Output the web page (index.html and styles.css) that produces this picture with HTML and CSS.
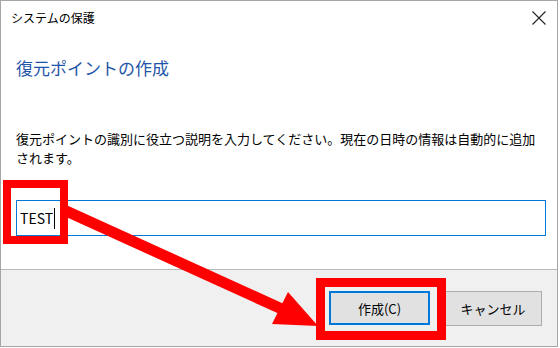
FILE: index.html
```html
<!DOCTYPE html>
<html lang="ja">
<head>
    <meta charset="UTF-8">
    <title>システムの保護</title>
    <link rel="stylesheet" href="styles.css">
</head>
<body>
    <div class="window">
        <div class="titlebar">
            <span class="title">システムの保護</span>
            <svg class="close" width="14" height="14" viewBox="0 0 14 14">
                <path d="M0.5 0.5 L13.5 13.5 M13.5 0.5 L0.5 13.5" stroke="#222" stroke-width="1.1" fill="none"/>
            </svg>
        </div>

        <div class="content">
            <h1 class="heading">復元ポイントの作成</h1>
            <p class="desc">復元ポイントの識別に役立つ説明を入力してください。現在の日時の情報は自動的に追加されます。</p>
            <div class="textbox">TEST<span class="caret"></span></div>
        </div>

        <div class="footer">
            <button class="btn btn-default">作成(C)</button>
            <button class="btn btn-cancel">キャンセル</button>
        </div>

        <!-- annotation: red boxes and arrow -->
        <svg class="marks" width="558" height="347" viewBox="0 0 558 347">
            <rect x="7" y="184" width="57" height="56" fill="none" stroke="#ff0000" stroke-width="8"/>
            <rect x="320.5" y="282.5" width="121" height="53" fill="none" stroke="#ff0000" stroke-width="9"/>
            <line x1="64" y1="210" x2="284" y2="310" stroke="#ff0000" stroke-width="11"/>
            <polygon points="288,292 272,324 318,326" fill="#ff0000"/>
        </svg>
    </div>
</body>
</html>
```

FILE: styles.css
```css
* {
    margin: 0;
    padding: 0;
    box-sizing: border-box;
}

body {
    background-color: #ffffff;
    font-family: "Noto Sans CJK JP", "Noto Sans", sans-serif;
    color: #000;
    overflow: hidden;
}

.window {
    position: relative;
    width: 558px;
    height: 347px;
    border: 1px solid #a6a6a6;
    background-color: #fff;
    display: flex;
    flex-direction: column;
}

.titlebar {
    height: 35px;
    display: flex;
    align-items: flex-start;
    justify-content: space-between;
    padding: 9px 10px 0 10px;
}

.title {
    font-size: 12px;
    line-height: 16px;
    color: #000;
}

.close {
    margin-top: 1px;
    margin-right: 1px;
}

.content {
    padding: 0 10px 0 15px;
    flex: 1;
}

.heading {
    margin-top: 20px;
    font-size: 17px;
    line-height: 24px;
    font-weight: normal;
    color: #1f55a8;
}

.desc {
    margin-top: 49px;
    width: 530px;
    font-size: 13px;
    line-height: 19px;
    color: #000;
}

.textbox {
    margin-top: 33px;
    width: 530px;
    height: 36px;
    border: 1px solid #0078d7;
    padding: 0 3px;
    font-size: 14px;
    line-height: 34px;
    display: flex;
    align-items: center;
}

.caret {
    display: inline-block;
    width: 1px;
    height: 21px;
    background-color: #000;
    margin-left: 1px;
}

.footer {
    height: 77px;
    border-top: 1px solid #b9b9b9;
    background-color: #f0f0f0;
    display: flex;
    justify-content: flex-end;
    align-items: flex-start;
    gap: 14px;
    padding: 21px 15px 0 0;
}

.btn {
    height: 34px;
    background-color: #e1e1e1;
    font-family: inherit;
    font-size: 13px;
    color: #000;
}

.btn-default {
    width: 101px;
    border: 2px solid #0078d7;
}

.btn-cancel {
    width: 98px;
    height: 35px;
    border: 1px solid #adadad;
}

.marks {
    position: absolute;
    left: -1px;
    top: -1px;
    pointer-events: none;
}
```
